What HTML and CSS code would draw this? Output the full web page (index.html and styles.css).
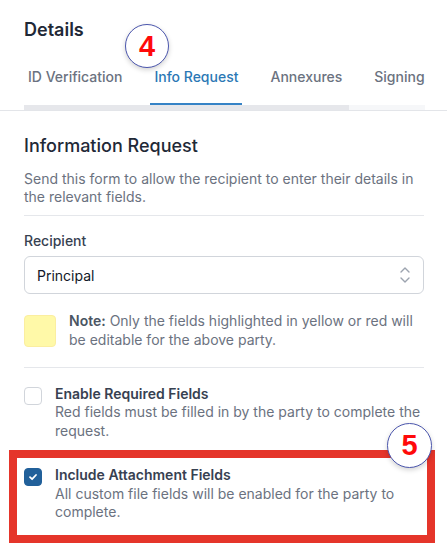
FILE: index.html
```html
<!DOCTYPE html>
<html>
<head>
<meta charset="utf-8">
<link rel="stylesheet" href="styles.css">
</head>
<body>
<header class="header">
  <h1 class="title">Details</h1>
  <div class="tabs-scroll">
    <nav class="tabs">
      <span class="tab">ID Verification</span>
      <span class="tab active">Info Request</span>
      <span class="tab">Annexures</span>
      <span class="tab">Signing</span>
    </nav>
    <div class="scrollbar"><div class="thumb"></div></div>
  </div>
</header>
<main class="content">
  <h2 class="section-title">Information Request</h2>
  <p class="desc intro">Send this form to allow the recipient to enter their details in the relevant fields.</p>
  <hr class="divider">
  <div class="field-label">Recipient</div>
  <div class="select">
    <span>Principal</span>
    <svg class="chev" width="12" height="18" viewBox="0 0 12 18"><path d="M2 6 L6 2 L10 6" fill="none" stroke="#9ca3af" stroke-width="1.4" stroke-linecap="round" stroke-linejoin="round"/><path d="M2 12 L6 16 L10 12" fill="none" stroke="#9ca3af" stroke-width="1.4" stroke-linecap="round" stroke-linejoin="round"/></svg>
  </div>
  <div class="note">
    <div class="swatch"></div>
    <p class="note-text"><strong>Note:</strong> Only the fields highlighted in yellow or red will be editable for the above party.</p>
  </div>
  <hr class="divider divider-2">
  <div class="check-row">
    <span class="checkbox"></span>
    <div class="check-body">
      <div class="check-label">Enable Required Fields</div>
      <div class="desc">Red fields must be filled in by the party to complete the request.</div>
    </div>
  </div>
  <div class="check-row row-2">
    <span class="checkbox checked"><svg width="10" height="10" viewBox="0 0 10 10"><path d="M2 5.2 L4.1 7.2 L8 3" fill="none" stroke="#fff" stroke-width="1.8" stroke-linecap="round" stroke-linejoin="round"/></svg></span>
    <div class="check-body">
      <div class="check-label">Include Attachment Fields</div>
      <div class="desc">All custom file fields will be enabled for the party to complete.</div>
    </div>
  </div>
</main>
<div class="annot-box"></div>
<div class="badge badge-4">4</div>
<div class="badge badge-5">5</div>
</body>
</html>
```
FILE: styles.css
```css
* { box-sizing: border-box; }
html, body { margin: 0; padding: 0; background: #fff; }
body {
  font-family: Inter, "Noto Sans", sans-serif;
  font-size: 14px;
  color: #1f2937;
  width: 447px;
  height: 551px;
  overflow: hidden;
  position: relative;
}
.header {
  padding-top: 18px;
  border-bottom: 1px solid #e3e5e9;
}
.title {
  margin: 0 24px;
  font-size: 18px;
  line-height: 24px;
  font-weight: 600;
  color: #1f2937;
}
.tabs-scroll {
  margin: 25px 0 0 24px;
  width: 401px;
  overflow: hidden;
}
.tabs {
  display: flex;
  gap: 24px;
  white-space: nowrap;
}
.tab {
  padding: 0 4px 16px;
  line-height: 20px;
  font-weight: 500;
  color: #6b7280;
  border-bottom: 2px solid transparent;
}
.tab.active {
  color: #2b78b5;
  border-bottom-color: #3683c6;
}
.scrollbar {
  height: 5px;
  background: #f6f7f9;
}
.thumb {
  width: 325px;
  height: 5px;
  background: #e6e7eb;
}
.content {
  padding: 21px 23px 0 24px;
}
.section-title {
  margin: 0;
  font-size: 18px;
  line-height: 28px;
  font-weight: 500;
  color: #1f2937;
}
.desc {
  margin: 0;
  line-height: 18.4px;
  color: #6b7280;
}
.intro { margin-top: 10px; }
.divider {
  margin: 8px 0 0;
  border: 0;
  border-top: 1px solid #e5e7eb;
}
.field-label {
  margin-top: 16px;
  line-height: 18.4px;
  font-weight: 500;
  color: #374151;
}
.select {
  margin-top: 6px;
  height: 38px;
  border: 1px solid #d1d5db;
  border-radius: 6px;
  display: flex;
  align-items: center;
  justify-content: space-between;
  padding: 0 12px 0 12px;
  color: #111827;
}
.note {
  margin-top: 18px;
  display: flex;
  align-items: flex-start;
  gap: 13px;
}
.swatch {
  flex: none;
  width: 32px;
  height: 32px;
  margin-top: 3px;
  border-radius: 4px;
  background: #fff9a8;
  border: 1px solid #fbeea0;
}
.note-text {
  margin: 0;
  line-height: 18.4px;
  color: #6b7280;
}
.note-text strong {
  font-weight: 600;
  color: #4b5563;
}
.divider-2 { margin-top: 18px; }
.check-row {
  display: flex;
  align-items: flex-start;
  gap: 13px;
  margin-top: 17px;
}
.row-2 { margin-top: 26px; }
.checkbox {
  flex: none;
  width: 18px;
  height: 18px;
  margin-top: 2px;
  border: 1px solid #d1d5db;
  border-radius: 4px;
  background: #fff;
  display: flex;
  align-items: center;
  justify-content: center;
}
.checkbox.checked {
  background: #21609a;
  border-color: #21609a;
}
.check-label {
  line-height: 18.4px;
  font-weight: 600;
  color: #374151;
}
.annot-box {
  position: absolute;
  left: 9px;
  top: 450px;
  width: 426px;
  height: 93px;
  border: 8px solid #e5352a;
}
.badge {
  position: absolute;
  width: 44px;
  height: 44px;
  border-radius: 50%;
  border: 1.5px solid #4b56ad;
  background: #fff;
  box-shadow: 0 2px 5px rgba(0,0,0,0.18);
  display: flex;
  align-items: center;
  justify-content: center;
  font-family: "Liberation Sans", Arial, sans-serif;
  font-weight: 700;
  font-size: 29px;
  color: #ff0a0a;
  line-height: 1;
}
.badge-4 { left: 125px; top: 24px; }
.badge-5 { left: 387px; top: 423px; width: 45px; height: 45px; }
```
